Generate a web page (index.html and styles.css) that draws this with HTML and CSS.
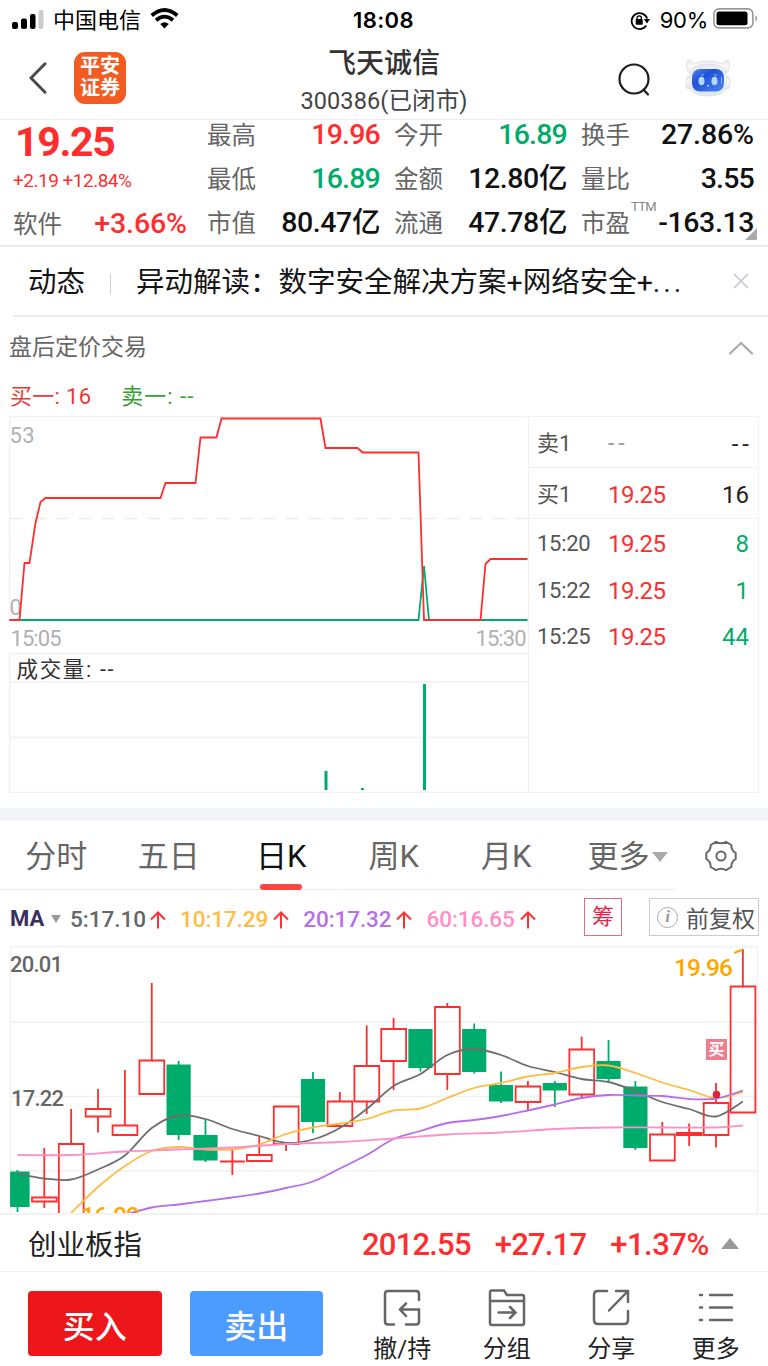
FILE: index.html
```html
<!DOCTYPE html>
<html lang="zh-CN">
<head>
<meta charset="utf-8">
<title>飞天诚信</title>
<link rel="stylesheet" href="styles.css">
</head>
<body>
<div class="app">
  <div class="status">
    <div class="status-side">
      <svg class="signal" width="32" height="20" viewBox="0 0 32 20"><rect x="0" y="13" width="6" height="7" rx="2"/><rect x="9" y="9.500" width="6" height="10.500" rx="2"/><rect x="18" y="5" width="5.500" height="15" rx="2"/><rect x="26.500" y="1" width="5" height="19" rx="2" fill="#ccc"/></svg>
      <span class="carrier">中国电信</span>
      <svg class="wifi" width="29" height="21" viewBox="0 0 29 21" fill="none" stroke="#000" stroke-width="3.800"><path d="M1.700 7.500Q14.500-3.500 27.300 7.500"/><path d="M6 12.300Q14.500 5 23 12.300"/><path d="M10.200 15.900Q14.500 12.600 18.800 15.900L14.500 20.500Z" fill="#000" stroke="none"/></svg>
    </div>
    <span class="clock">18:08</span>
    <div class="status-side status-end">
      <svg width="20" height="19" viewBox="0 0 20 19"><path d="M16.300 14.500A8 8 0 1 1 17.200 7.500" fill="none" stroke="#000" stroke-width="1.800"/><path d="M13.800 8H20L17 12.500Z"/><rect x="5.700" y="8" width="7" height="5.800" rx=".8"/><path d="M7 8.500V7a2.200 2.200 0 0 1 4.400 0v1.500" fill="none" stroke="#000" stroke-width="1.300"/></svg>
      <span class="percent">90%</span>
      <svg class="battery" width="46" height="21" viewBox="0 0 46 21"><rect x=".9" y=".9" width="39" height="19" rx="5" fill="none" stroke="#999" stroke-width="1.600"/><rect x="3.500" y="3.500" width="31" height="13.800" rx="2.500"/><path d="M42.500 7Q45.500 10.300 42.500 13.800Z" fill="#888"/></svg>
    </div>
  </div>

  <header class="header">
    <div class="header-side">
      <svg width="18" height="32" viewBox="0 0 18 32" fill="none" stroke="#4a4a4a" stroke-width="3" stroke-linecap="round"><path d="M16 1.800 2 16l14 14.200"/></svg>
      <div class="logo"><span>平安</span><span>证券</span></div>
    </div>
    <div class="heading"><h1>飞天诚信</h1><p>300386<i>(</i>已闭市<i>)</i></p></div>
    <div class="header-side header-end">
      <svg class="search" width="32" height="34" viewBox="0 0 32 34" fill="none" stroke="#1c1c22" stroke-width="2.200" stroke-linecap="round"><circle cx="16" cy="16" r="14.500"/><path d="M25.500 26.500l4.500 5"/></svg>
      <svg class="robot" width="46" height="38" viewBox="0 0 46 38">
        <defs><linearGradient id="face" x1="0" y1="0" x2="1" y2="1"><stop offset="0" stop-color="#5389ef"/><stop offset=".35" stop-color="#1e51d8"/><stop offset="1" stop-color="#4b83f2"/></linearGradient><linearGradient id="shell" x1="0" y1="0" x2="0" y2="1"><stop offset="0" stop-color="#e5e7ec"/><stop offset=".4" stop-color="#fafafc"/><stop offset="1" stop-color="#e1e4eb"/></linearGradient></defs>
        <g fill="url(#shell)" stroke="#dcdee4" stroke-width=".8"><path d="M3 1Q7 1 8.500 5Q13 2 23 2T37.500 5Q39 1 43 1Q47 9 41 15L5 15Q-1 9 3 1Z"/><rect x="1" y="17" width="8" height="13" rx="3.500"/><rect x="37" y="17" width="8" height="13" rx="3.500"/><path d="M5 18Q5 5 23 5T41 18V27Q40 37 23 37T5 27Z"/></g>
        <rect x="7" y="10" width="32" height="22.500" rx="8" fill="url(#face)"/>
        <ellipse cx="16.500" cy="22" rx="3" ry="4.300" fill="#b5d7ff"/><ellipse cx="29.500" cy="22" rx="3" ry="4.300" fill="#b5d7ff"/><path d="M22 26h2l-1 2z" fill="#fff"/><path d="M36.500 18v7M16 16h3M29 16h3" stroke="#8db5ff"/>
      </svg>
    </div>
  </header>

  <section class="quote">
    <div class="col lead"><strong class="price red">19.25</strong><span class="delta red">+2.19 +12.84%</span><div class="cell"><label>软件</label><b class="red pct">+3.66%</b></div></div>
    <div class="col"><div class="cell"><label>最高</label><b class="red num">19.96</b></div><div class="cell"><label>最低</label><b class="green num">16.89</b></div><div class="cell"><label>市值</label><b>80.47亿</b></div></div>
    <div class="col"><div class="cell"><label>今开</label><b class="green num">16.89</b></div><div class="cell"><label>金额</label><b>12.80亿</b></div><div class="cell"><label>流通</label><b>47.78亿</b></div></div>
    <div class="col"><div class="cell"><label>换手</label><b class="pct">27.86%</b></div><div class="cell"><label>量比</label><b class="num">3.55</b></div><div class="cell"><label>市盈<sup>TTM</sup></label><b>-163.13</b></div></div>
    <i class="corner"></i>
  </section>

  <section class="news">
    <span class="news-tag">动态</span><i class="news-sep"></i><span class="news-text">异动解读：数字安全解决方案+网络安全+<span class="dots">...</span></span>
    <svg width="16" height="16" viewBox="0 0 16 16" stroke="#c3c3d2" stroke-width="1.500"><path d="M1 1l14 14M15 1L1 15"/></svg>
  </section>

  <section class="after">
    <div class="after-head"><h2>盘后定价交易</h2><svg width="26" height="14" viewBox="0 0 26 14" fill="none" stroke="#aaa" stroke-width="2.200" stroke-linecap="round"><path d="M2 12.500L13 2l11 10.500"/></svg></div>
    <div class="legend"><span class="bid">买一: 16</span><span class="ask">卖一: --</span></div>
    <div class="after-body">
      <svg class="after-chart" width="519" height="377" viewBox="9.500 416 519 377">
        <g class="frame"><path d="M10 620V416.500H528M10 653.500H528M10 653V792.500H528M10 682H528M10 737.500H528"/></g>
        <path d="M10 518.500H528" stroke="#ececec" stroke-width="1.500" stroke-dasharray="13 10"/>
        <g class="axis"><text x="10" y="443" textLength="25">53</text><text x="10" y="615">0</text><text x="11" y="646" textLength="51">15:05</text><text x="476" y="646" textLength="51">15:30</text></g>
        <path d="M10 620H419L424.500 566L429.500 620H528" class="line-green"/>
        <path d="M10 620H20L25 563H30L36 523L41 502L46 498H161L166 483H196L201 437.500H217L222 418.500H321L326 448H358L363 452.500H419L424.500 620H481L486 564L491 559H528" class="line-red"/>
        <text x="17" y="677" class="volume-label" textLength="97">成交量: --</text>
        <path d="M326.500 771V790M363 788V790M425 684V790" stroke="#00ac6b" stroke-width="3"/>
      </svg>
      <div class="book">
        <div class="order"><span>卖1</span><span class="dash">--</span><b>--</b></div>
        <div class="order"><span>买1</span><span class="red">19.25</span><b>16</b></div>
        <div class="tick"><span>15:20</span><span class="red">19.25</span><b class="green">8</b></div>
        <div class="tick"><span>15:22</span><span class="red">19.25</span><b class="green">1</b></div>
        <div class="tick"><span>15:25</span><span class="red">19.25</span><b class="green">44</b></div>
      </div>
    </div>
  </section>

  <nav class="tabs">
    <a>分时</a><a>五日</a><a class="active">日K</a><a>周K</a><a>月K</a><a class="more">更多<i></i></a>
    <svg class="gear" width="32" height="32" viewBox="0 0 32 32" fill="none" stroke="#666" stroke-width="2"><path d="M11 1.800Q16 4.800 21 1.800L26.300 5Q26.200 10.500 30.700 13V19Q26.200 21.500 26.300 27L21 30.200Q16 27.200 11 30.200L5.700 27Q5.800 21.500 1.300 19V13Q5.800 10.500 5.700 5Z" stroke-linejoin="round"/><circle cx="16" cy="16" r="4.600"/></svg>
  </nav>

  <div class="ma">
    <strong>MA</strong><i class="ma-caret"></i>
    <span class="ma5">5:17.10</span><svg class="up" viewBox="0 0 16 18"><path d="M8 17.500V2M1 8.500L8 1.500l7 7"/></svg>
    <span class="ma10">10:17.29</span><svg class="up" viewBox="0 0 16 18"><path d="M8 17.500V2M1 8.500L8 1.500l7 7"/></svg>
    <span class="ma20">20:17.32</span><svg class="up" viewBox="0 0 16 18"><path d="M8 17.500V2M1 8.500L8 1.500l7 7"/></svg>
    <span class="ma60">60:16.65</span><svg class="up" viewBox="0 0 16 18"><path d="M8 17.500V2M1 8.500L8 1.500l7 7"/></svg>
    <button class="chips">筹</button>
    <button class="adjust"><i>i</i>前复权</button>
  </div>

  <svg class="kchart" width="768" height="267" viewBox="0 946 768 267">
    <path d="M10.500 1213V946.500H757.500V1213M10 1022H757M10 1096.500H757M10 1171H757" class="kgrid"/>
    <g class="klabel"><text x="10" y="972" textLength="53">20.01</text><text x="11" y="1106" textLength="53">17.22</text></g>
    <g id="candles"></g><g id="averages"></g>
    <text x="81" y="1224" class="extreme" textLength="59">16.09</text>
    <text x="674" y="976" class="extreme" textLength="59">19.96</text><path d="M734 953l9-3.500" stroke="#ffa500" stroke-width="2"/>
    <circle cx="716.500" cy="1094.500" r="3.800" fill="#e21f3d"/>
    <rect x="706" y="1039" width="21" height="21" fill="#ee7f91"/><text x="708.500" y="1055" class="mark">买</text>
  </svg>

  <div class="index"><span>创业板指</span><b>2012.55</b><b>+27.17</b><b>+1.37%</b><i></i></div>

  <footer class="actions">
    <button class="trade buy">买入</button><button class="trade sell">卖出</button>
    <a><svg viewBox="0 0 38 38"><path d="M11 35.500H5Q2 35.500 2 32.500V5Q2 2 5 2H33Q36 2 36 5V11M23 35.500H33Q36 35.500 36 32.500V20.500H17M23 14.500L17 20.500L23 27"/></svg><span>撤/持</span></a>
    <a><svg viewBox="0 0 38 38"><path d="M2 12H36M4 1.500H16L19 6H34Q36 6 36 8V34Q36 36 34 36H4Q2 36 2 34V3.500Q2 1.500 4 1.500M10.500 23.500H27M22 18L27.500 23.500L22 29"/></svg><span>分组</span></a>
    <a><svg viewBox="0 0 38 38"><path d="M15 2H6Q2 2 2 6V31Q2 35 6 35H32Q36 35 36 31V22M24 2H36V13M36 2L17 21.500"/></svg><span>分享</span></a>
    <a><svg viewBox="0 0 38 38"><path d="M3 6H5M3 18.500H5M3 31H5M13 6H35M13 18.500H35M13 31H35"/></svg><span>更多</span></a>
  </footer>
</div>
<script src="chart.js"></script>
</body>
</html>
```
FILE: styles.css
```css
* { box-sizing: border-box; }
body, h1, h2, p { margin: 0; }
body { background: #fff; font-family: Roboto, "Noto Sans CJK SC", sans-serif; color: #111; }
.app { width: 768px; height: 1366px; overflow: hidden; display: flex; flex-direction: column; }
.app > * { flex-shrink: 0; }
label, span, b, a { white-space: nowrap; }
button { padding: 0; font-family: inherit; background: #fff; }
.red { color: #ff2e2e !important; }
.green { color: #00ac6b !important; }

.status { height: 40px; display: flex; align-items: center; padding: 0 12px; font-family: Inter, "Noto Sans CJK SC", sans-serif; font-size: 22px; line-height: 28px; color: #000; }
.status-side { width: 341px; display: flex; align-items: center; }
.status-end { width: auto; margin-left: auto; }
.signal { margin: 0 9px 2px 0; }
.wifi { margin: 0 0 3px 9px; }
.clock { font-weight: 600; letter-spacing: 0.4px; }
.percent { margin-left: 10px; letter-spacing: -0.3px; }
.battery { margin: 0 -3px 3px 5px; }

.header { height: 80px; border-bottom: 1px solid #eee; display: grid; grid-template-columns: 270px 1fr 270px; }
.header-side { display: flex; align-items: center; padding: 0 0 3px 29px; gap: 27px; }
.header-end { justify-content: flex-end; padding: 0 37px 3px 0; gap: 35px; }
.search { margin-top: 3px; }
.logo { width: 52px; height: 52px; border-radius: 11px; background: #f25b22; color: #fff; display: flex; flex-direction: column; justify-content: center; align-items: center; gap: 1px; font-size: 20px; font-weight: 700; padding-bottom: 1px; }
.logo span { line-height: 21px; }
.heading { text-align: center; }
.heading h1 { font-size: 28px; line-height: 36px; font-weight: 500; color: #333; padding-top: 6px; }
.heading p { font-size: 23.500px; line-height: 30px; color: #444; padding-top: 4px; letter-spacing: 0.1px; }
.heading i { font-style: normal; }

.quote { position: relative; height: 127px; border-bottom: 2px solid #e9e9ee; padding-left: 13px; display: grid; grid-template-columns: 174px 179px 173px 173px; column-gap: 14px; }
.quote .col:nth-child(2) { margin-left: 6px; }
.col { display: grid; grid-template-rows: 37px 44px 43px; align-items: center; }
.cell { display: flex; justify-content: space-between; align-items: center; line-height: 30px; }
.col:not(.lead) .cell:first-child { margin-top: -7px; }
.cell label { position: relative; top: 1px; font-size: 24.500px; color: #666; }
.lead label { top: 2px; }
.cell b { font-size: 28.500px; font-weight: 500; letter-spacing: -0.4px; }
.cell .num { letter-spacing: -0.8px; }
.cell .pct { letter-spacing: -0.1px; }
.lead .pct { padding-top: 2px; }
.price { font-size: 41px; font-weight: 700; line-height: 40px; padding: 7px 0 0 2px; letter-spacing: -1.300px; }
.delta { font-size: 19px; letter-spacing: -0.5px; padding-top: 2px; }
.cell sup { position: absolute; left: 50px; top: -9px; font-size: 13px; line-height: 14px; color: #888; letter-spacing: -0.7px; vertical-align: baseline; }
.corner { position: absolute; right: 11px; bottom: 5px; border-left: 12px solid transparent; border-bottom: 12px solid #aaa; }

.news { height: 70px; margin-left: 13px; border-bottom: 2px solid #ebebf4; display: flex; align-items: center; font-size: 28.500px; padding: 0 19px 0 15px; color: #151515; line-height: 36px; }
.news-tag { width: 82px; padding-top: 4px; }
.news-sep { width: 1px; height: 20px; margin: 5px 25px 0 0; background: #ccc; }
.news-text { flex: 1; padding-top: 4px; }
.dots { letter-spacing: 3px; }

.after { height: 491px; }
.after-head { height: 65px; display: flex; align-items: center; justify-content: space-between; padding: 0 14px 3px 9px; }
.after h2 { font-size: 23px; font-weight: 400; color: #666; line-height: 30px; }
.legend { height: 34px; display: flex; gap: 30px; padding: 1px 10px; font-size: 22px; line-height: 28px; }
.bid { color: #e83a3a; letter-spacing: 0.3px; }
.ask { color: #33a133; letter-spacing: 1px; }
.after-body { display: flex; padding-left: 9px; height: 377px; }
.after-chart { display: block; }
.frame { fill: none; stroke: #f0f0f6; stroke-width: 1.500; }
.axis { font-size: 22px; fill: #b0b0b0; }
.line-green, .line-red { fill: none; stroke-width: 1.800; stroke: #00ac6b; }
.line-red { stroke: #ff2e2e; }
.volume-label { font-size: 21.500px; fill: #333; }
.book { width: 231px; border: 1.500px solid #f0f0f6; font-size: 23px; color: #555; }
.order, .tick { display: grid; grid-template-columns: 71px 76px 1fr; align-items: center; padding: 4px 9px 0 8px; height: 51px; border-bottom: 1.500px solid #f0f0f6; line-height: 28px; }
.tick { height: 46.500px; border: 0; }
.tick span:first-child { font-size: 22px; letter-spacing: -0.3px; }
.tick .red, .order .red { font-size: 24px; letter-spacing: -0.6px; }
.order span:first-child { font-size: 22px; }
.dash { letter-spacing: 4px; color: #999; }
.book b { text-align: right; font-weight: 400; color: #222; font-size: 24px; }
.order:first-child b { letter-spacing: 4px; margin-right: -4px; }

.tabs { height: 82px; border-top: 13px solid #f3f4f9; display: flex; position: relative; font-size: 31px; line-height: 71px; color: #666; }
.tabs::after { content: ""; position: absolute; left: 0; bottom: 0; width: 675px; height: 1px; background: #eee; }
.tabs a { width: 112.500px; text-align: center; position: relative; }
.tabs .active { color: #111; }
.active::after { content: ""; position: absolute; left: 35px; bottom: 0; width: 42px; height: 6px; border-radius: 3px; background: #fa4545; z-index: 1; }
.tabs .more { width: 130px; }
.more i { display: inline-block; vertical-align: 5px; margin-left: 2px; border: 8px solid transparent; border-top: 10px solid #aaa; border-bottom: 0; }
.gear { margin: 19px 0 0 12.500px; }

.ma { height: 56px; display: flex; align-items: center; padding: 1px 9px 0 10px; font-size: 22.500px; font-weight: 500; line-height: 28px; }
.ma strong { color: #393060; font-weight: 700; width: 32px; font-size: 22px; }
.ma-caret { border: 5px solid transparent; border-top: 8px solid #999; border-bottom: 0; margin: 0 9px; }
.ma5 { color: #666; width: 75px; }
.ma10, .ma20, .ma60 { width: 88px; letter-spacing: -0.1px; }
.ma10 { color: #ffbc45; }
.ma20 { color: #b66fe7; }
.ma60 { color: #ff8fc4; }
.up { width: 16px; height: 18px; margin: 2px 14px 0 5px; fill: none; stroke: #ff3030; stroke-width: 2; }
.up:nth-of-type(n+2) { margin-right: 14.300px; }
.chips { margin-left: 34px; width: 38px; height: 38px; margin-top: -3px; border: 1.500px solid #e36b80; color: #e62246; font-size: 22px; line-height: 34px; }
.adjust { margin-left: auto; width: 110px; height: 38px; margin-top: -3px; border: 1.500px solid #ccc; color: #555; font-size: 23px; display: flex; align-items: center; padding-left: 7px; gap: 8px; white-space: nowrap; letter-spacing: 0; }
.adjust i { width: 21px; height: 21px; border: 1.200px solid #aaa; border-radius: 50%; font: italic bold 17px/18px "Liberation Serif", serif; color: #999; text-align: center; }

.kchart { display: block; }
.kgrid { fill: none; stroke: #f1f1f1; stroke-width: 1.500; }
.klabel { font-size: 22px; fill: #666; font-weight: 500; }
.extreme { font-size: 24.500px; font-weight: 500; fill: #ffa500; }
.mark { font-size: 16px; font-weight: 700; fill: #fff; }
.candle-red { fill: none; stroke: #ff2e2e; stroke-width: 1.800; }
.candle-green { fill: #00ac6b; stroke: #00ac6b; stroke-width: 1.800; }
.average { fill: none; stroke-width: 1.800; }

.index { height: 59px; border-top: 2px solid #f2f2f2; border-bottom: 1.500px solid #efefef; display: flex; align-items: center; padding: 3px 0 0 28px; line-height: 36px; }
.index span { font-size: 28.500px; color: #222; width: 334px; padding-top: 2px; }
.index b { color: #ff2e2e; font-weight: 500; font-size: 31px; margin-right: 24px; letter-spacing: -0.8px; }
.index b:nth-of-type(3) { letter-spacing: -0.5px; }
.index i { border: 9px solid transparent; border-bottom: 11px solid #999; border-top: 0; margin: -3px 0 0 -12px; }

.actions { height: 94px; display: flex; padding-left: 28px; }
.trade { width: 133.500px; height: 65px; margin: 19px 28px 0 0; border: 0; border-radius: 4px; background: #ec161b; color: #fff; font-size: 32px; line-height: 69px; padding-top: 2px; font-weight: 500; overflow: hidden; }
.sell { background: #4c9cff; margin-right: 27px; }
.actions a { width: 104.500px; display: flex; flex-direction: column; align-items: center; padding-top: 17px; font-size: 24px; line-height: 30px; color: #222; }
.actions a svg { width: 38px; height: 38px; margin-bottom: 7px; fill: none; stroke: #666; stroke-width: 2.500; stroke-linecap: round; }
```
FILE: chart.js
```js
const ns = "http://www.w3.org/2000/svg";
const X = i => (i === 0 ? 17.5 : 17.4 + i * 26.87);

function draw(parent, d, cls, color) {
  const p = document.createElementNS(ns, "path");
  p.setAttribute("d", d);
  p.setAttribute("class", cls);
  if (color) p.setAttribute("stroke", color);
  document.getElementById(parent).appendChild(p);
}

// [rising, body top, body bottom, high, low]
const candles = [
  [0, 1172.5, 1206, 1170, 1212], [1, 1197.5, 1201.5, 1148, 1208], [1, 1144, 1220, 1109, 1220],
  [1, 1109, 1116.5, 1089, 1132.5], [1, 1125.5, 1135, 1070, 1135], [1, 1060.5, 1094, 983, 1094],
  [0, 1065.5, 1134, 1061, 1140], [0, 1136, 1159.5, 1119.5, 1162], [1, 1161.5, 1161.5, 1149.5, 1175],
  [1, 1155, 1161, 1136, 1161], [1, 1106.5, 1144, 1106.5, 1151], [0, 1080, 1121, 1072, 1133],
  [1, 1101.5, 1126, 1092, 1128], [1, 1066, 1101.5, 1025.5, 1114], [1, 1029, 1061, 1018, 1090],
  [0, 1030, 1067, 1029, 1071.5], [1, 1007, 1074, 1003, 1090], [0, 1030, 1071, 1023.5, 1073.5],
  [0, 1086, 1100.5, 1071.5, 1103], [1, 1086.5, 1102, 1081, 1110.5], [0, 1084, 1089.5, 1081, 1107],
  [1, 1049.5, 1094.5, 1036.5, 1097], [0, 1062, 1078, 1040, 1081], [0, 1087.5, 1147, 1081, 1150],
  [1, 1134.5, 1160.5, 1122, 1160.5], [1, 1133, 1135, 1123.5, 1146], [1, 1103, 1135, 1083, 1147.5],
  [1, 986.5, 1112.5, 949, 1112.5]
];
candles.forEach(([up, top, bottom, high, low], i) => {
  const x = X(i), r = up ? x + 12.5 : x + 11.2;
  const l = i === 0 ? 11 : up ? x - 12.3 : x - 11.2;
  draw("candles", `M${l} ${top}H${r}V${bottom}H${l}ZM${x} ${high}V${top}M${x} ${bottom}V${low}`, up ? "candle-red" : "candle-green");
});

// Catmull-Rom spline through the average values
function average(points, color) {
  const at = i => points[Math.max(0, Math.min(points.length - 1, i))];
  let d = `M${points[0]}`;
  for (let i = 0; i < points.length - 1; i++) {
    const [a, b, c, e] = [at(i - 1), at(i), at(i + 1), at(i + 2)];
    d += `C${b[0] + (c[0] - a[0]) / 6} ${b[1] + (c[1] - a[1]) / 6} ${c[0] - (e[0] - b[0]) / 6} ${c[1] - (e[1] - b[1]) / 6} ${c}`;
  }
  draw("averages", d, "average", color);
}
const series = (start, step, ys) => ys.map((y, i) => [X(Math.min(27, start + i * step)), y]);
average(series(0, 1, [1173.5, 1178.5, 1179.5, 1169.5, 1155.5, 1128, 1115.5, 1119, 1129, 1136, 1142.8, 1139.5, 1128, 1109, 1086, 1074, 1055, 1049, 1055, 1066, 1072, 1079, 1082, 1091, 1102, 1109, 1116.5, 1101.5]), "#6e6e6e");
average(series(2, 1, [1213, 1187, 1166, 1151, 1147, 1149.5, 1149.5, 1144.5, 1134, 1127.5, 1123.5, 1119, 1110.5, 1108.5, 1098, 1088, 1083, 1076.5, 1073, 1067, 1065.5, 1073, 1082.5, 1090, 1098, 1092]), "#ffbc45");
average(series(4, 1, [1215, 1207.5, 1204.5, 1201, 1197.5, 1193.5, 1188, 1181.5, 1168.5, 1155, 1139, 1131, 1123, 1120, 1116, 1110.5, 1104.5, 1098, 1095, 1095.5, 1096, 1099, 1098.5, 1090.5]), "#b66fe7");
average(series(0, 2, [1155, 1155, 1151.5, 1149.5, 1147.5, 1144, 1142, 1138.5, 1134.5, 1132.5, 1129, 1127.5, 1127.5, 1127.5, 1125.5]), "#ff8fc4");
```
